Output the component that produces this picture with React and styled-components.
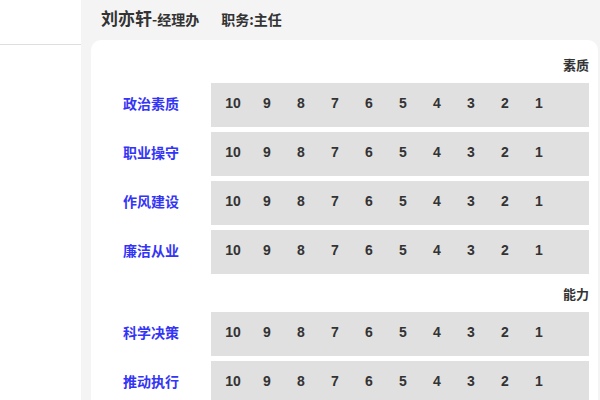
import React from "react";
import styled, { createGlobalStyle } from "styled-components";

const Global = createGlobalStyle`
  html, body { margin: 0; padding: 0; }
  body {
    font-family: "Liberation Sans", "Noto Sans CJK SC", sans-serif;
    background: #f4f4f4;
    overflow: hidden;
  }
`;

const Page = styled.div`
  display: flex;
  width: 600px;
  height: 400px;
  overflow: hidden;
`;

const Sidebar = styled.aside`
  width: 81px;
  flex-shrink: 0;
  background: #fff;
`;

const SideTop = styled.div`
  height: 44px;
  border-bottom: 1px solid #dedede;
`;

const Main = styled.main`
  flex: 1;
  min-width: 0;
  background: #f4f4f4;
  padding: 0 2px 0 10px;
  display: flex;
  flex-direction: column;
`;

const Header = styled.header`
  height: 40px;
  flex-shrink: 0;
  display: flex;
  align-items: baseline;
  padding: 5px 0 0 10px;
  box-sizing: border-box;
  color: #333;
  font-family: "Noto Sans CJK SC", sans-serif;
`;

const Name = styled.span`
  font-size: 17px;
  font-weight: 700;
`;

const Dept = styled.span`
  font-size: 14px;
  font-weight: 700;
`;

const Duty = styled.span`
  font-size: 14px;
  font-weight: 700;
  margin-left: 22px;
`;

const Card = styled.section`
  flex: 1;
  min-height: 0;
  overflow: hidden;
  background: #fff;
  border-radius: 10px 10px 0 0;
  padding: 5px 9px 0 0;
`;

const SectionTitle = styled.div`
  height: 38px;
  display: flex;
  align-items: center;
  justify-content: flex-end;
  font-family: "Noto Sans CJK SC", sans-serif;
  font-size: 13px;
  font-weight: 700;
  color: #333;
`;

const Rows = styled.div`
  display: flex;
  flex-direction: column;
  gap: 5px;
`;

const Row = styled.div`
  display: flex;
  height: 44px;
  flex-shrink: 0;
`;

const Label = styled.div`
  width: 120px;
  flex-shrink: 0;
  display: flex;
  align-items: center;
  justify-content: center;
  padding-bottom: 5px;
  box-sizing: border-box;
  font-family: "Noto Sans CJK SC", sans-serif;
  font-size: 14px;
  font-weight: 700;
  color: #3434f6;
`;

const Scores = styled.div`
  flex: 1;
  display: flex;
  align-items: center;
  padding: 0 0 4px 5px;
  box-sizing: border-box;
  background: #e0e0e0;
`;

const Score = styled.span`
  width: 34px;
  text-align: center;
  font-size: 14px;
  font-weight: 700;
  color: #333;
`;

const scores = [10, 9, 8, 7, 6, 5, 4, 3, 2, 1];

const sections = [
  { title: "素质", items: ["政治素质", "职业操守", "作风建设", "廉洁从业"] },
  { title: "能力", items: ["科学决策", "推动执行"] },
];

export default function App() {
  return (
    <>
      <Global />
      <Page>
        <Sidebar>
          <SideTop />
        </Sidebar>
        <Main>
          <Header>
            <Name>刘亦轩</Name>
            <Dept>-经理办</Dept>
            <Duty>职务:主任</Duty>
          </Header>
          <Card>
            {sections.map((s) => (
              <div key={s.title}>
                <SectionTitle>{s.title}</SectionTitle>
                <Rows>
                  {s.items.map((item) => (
                    <Row key={item}>
                      <Label>{item}</Label>
                      <Scores>
                        {scores.map((n) => (
                          <Score key={n}>{n}</Score>
                        ))}
                      </Scores>
                    </Row>
                  ))}
                </Rows>
              </div>
            ))}
          </Card>
        </Main>
      </Page>
    </>
  );
}
